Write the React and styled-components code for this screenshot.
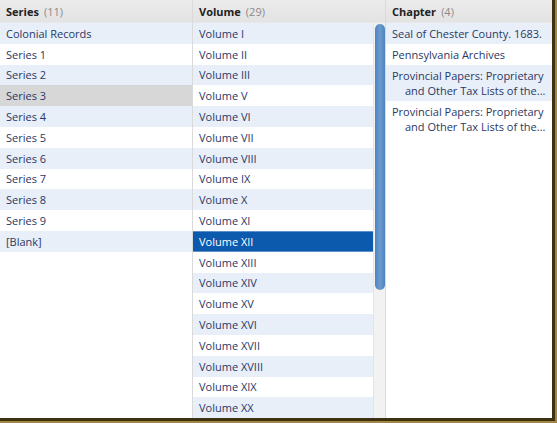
import React from 'react'
import styled, { createGlobalStyle } from 'styled-components'

const series = ['Colonial Records', 'Series 1', 'Series 2', 'Series 3', 'Series 4', 'Series 5', 'Series 6', 'Series 7', 'Series 8', 'Series 9', '[Blank]']
const volumes = ['I', 'II', 'III', 'V', 'VI', 'VII', 'VIII', 'IX', 'X', 'XI', 'XII', 'XIII', 'XIV', 'XV', 'XVI', 'XVII', 'XVIII', 'XIX', 'XX']
const chapters = [
  'Seal of Chester County. 1683.',
  'Pennsylvania Archives',
  'Provincial Papers: Proprietary and Other Tax Lists of the...',
  'Provincial Papers: Proprietary and Other Tax Lists of the...',
]

const App = () => {
  return (
    <Frame>
      <Global />
      <Browser>
        <Column $width="192px">
          <Header>Series <Count>(11)</Count></Header>
          <List>
            {series.map((s, i) => (
              <Row key={s} $odd={i % 2 === 1} $state={i === 3 ? 'grey' : null}>{s}</Row>
            ))}
          </List>
        </Column>
        <Column $width="192px">
          <Header>Volume <Count>(29)</Count></Header>
          <Scroller>
            <List>
              {volumes.map((v, i) => (
                <Row key={v} $odd={i % 2 === 1} $state={i === 10 ? 'blue' : null}>Volume {v}</Row>
              ))}
            </List>
            <Track>
              <Thumb />
            </Track>
          </Scroller>
        </Column>
        <Column>
          <Header>Chapter <Count>(4)</Count></Header>
          <List>
            {chapters.map((c, i) => (
              <Row key={i} $odd={i % 2 === 1} $wrap>{c}</Row>
            ))}
          </List>
        </Column>
      </Browser>
    </Frame>
  )
}

export default App

const Global = createGlobalStyle`
  body {
    margin: 0;
    background: #fff;
  }
`

const Frame = styled.div`
  width: 557px;
  height: 423px;
  box-sizing: border-box;
  background: #fff;
  overflow: hidden;
  border-right: 2px solid #a08743;
  border-bottom: 2px solid #a08743;
`

const Browser = styled.div`
  width: 555px;
  height: 421px;
  box-sizing: border-box;
  display: flex;
  overflow: hidden;
  background: #fff;
  font-family: "Open Sans", sans-serif;
  font-size: 11px;
  border-right: 3px solid #3d3112;
  border-bottom: 3px solid #3d3112;
`

const Column = styled.div`
  width: ${p => p.$width || 'auto'};
  flex: ${p => (p.$width ? 'none' : 1)};
  display: flex;
  flex-direction: column;
  border-right: ${p => (p.$width ? '1px solid #dadada' : 'none')};
  min-width: 0;
`

const Header = styled.div`
  height: 22px;
  flex: none;
  display: flex;
  align-items: center;
  gap: 5px;
  padding: 0 6px;
  background: linear-gradient(#ebebeb, #e3e3e3);
  color: #222;
  font-weight: 700;
  border-bottom: 1px solid #e8e8e8;
`

const Count = styled.span`
  font-weight: 400;
  color: #8a8a8a;
`

const Scroller = styled.div`
  flex: 1;
  display: flex;
  min-height: 0;
`

const List = styled.div`
  flex: 1;
  min-width: 0;
`

const Row = styled.div`
  min-height: 20.8px;
  box-sizing: border-box;
  padding: ${p => (p.$wrap ? '3px 4px 3px 19px' : '0 6px')};
  text-indent: ${p => (p.$wrap ? '-13px' : '0')};
  display: ${p => (p.$wrap ? 'block' : 'flex')};
  align-items: center;
  line-height: ${p => (p.$wrap ? '15px' : 'normal')};
  white-space: ${p => (p.$wrap ? 'normal' : 'nowrap')};
  color: ${p => (p.$state === 'blue' ? '#fff' : '#2a3864')};
  background: ${p =>
    p.$state === 'blue' ? '#0b5aae' : p.$state === 'grey' ? '#d7d7d7' : p.$odd ? '#fff' : '#e8eff8'};
  border: ${p => (p.$state === 'blue' ? '1px solid #5d8fc9' : 'none')};
  border-width: ${p => (p.$state === 'blue' ? '1px 0' : '0')};
`

const Track = styled.div`
  width: 12px;
  flex: none;
  background: #f2f2f2;
  border-left: 1px solid #e4e4e4;
  padding: 1px 0 0 1px;
  box-sizing: border-box;
`

const Thumb = styled.div`
  width: 10px;
  height: 266px;
  border-radius: 5px;
  background: linear-gradient(90deg, #4f83bf, #6b9bd0 50%, #4f83bf);
`
